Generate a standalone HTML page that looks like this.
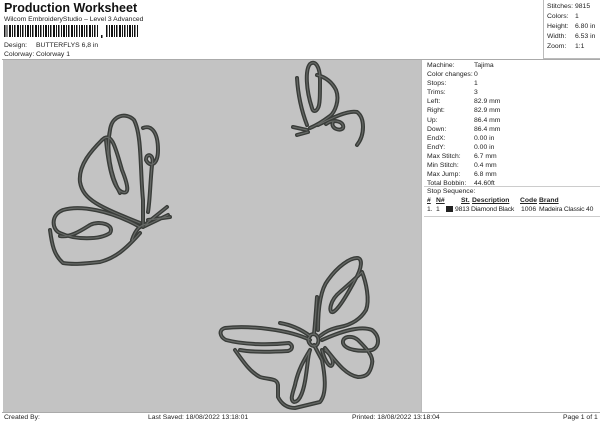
<!DOCTYPE html>
<html><head><meta charset="utf-8"><style>
*{margin:0;padding:0;box-sizing:border-box}
body{width:600px;height:424px;background:#fff;font-family:"Liberation Sans",sans-serif;position:relative;overflow:hidden;color:#222}
.a{position:absolute;white-space:nowrap}
.s{font-size:6.8px}
</style></head><body>
<div class="a" style="left:4px;top:1px;font-size:12.5px;font-weight:bold;color:#111">Production Worksheet</div>
<div class="a s" style="left:4px;top:16px">Wilcom EmbroideryStudio – Level 3 Advanced</div>
<svg class="a" style="left:4px;top:25px" width="135" height="14">
<g fill="#111">
<rect x="0" y="0" width="1.5" height="12"/><rect x="2.5" y="0" width="1" height="12"/><rect x="5" y="0" width="2" height="12"/><rect x="8" y="0" width="1" height="12"/><rect x="10" y="0" width="1.5" height="12"/><rect x="13" y="0" width="2" height="12"/><rect x="16" y="0" width="1" height="12"/><rect x="18" y="0" width="1.5" height="12"/><rect x="21" y="0" width="1" height="12"/><rect x="23" y="0" width="2" height="12"/><rect x="26" y="0" width="1" height="12"/><rect x="28" y="0" width="1.5" height="12"/><rect x="31" y="0" width="2" height="12"/><rect x="34" y="0" width="1" height="12"/><rect x="36" y="0" width="1.5" height="12"/><rect x="39" y="0" width="1" height="12"/><rect x="41" y="0" width="2" height="12"/><rect x="44" y="0" width="1" height="12"/><rect x="46" y="0" width="1.5" height="12"/><rect x="49" y="0" width="2" height="12"/><rect x="52" y="0" width="1" height="12"/><rect x="54" y="0" width="1.5" height="12"/><rect x="57" y="0" width="1" height="12"/><rect x="59" y="0" width="2" height="12"/><rect x="62" y="0" width="1" height="12"/><rect x="64" y="0" width="1.5" height="12"/><rect x="67" y="0" width="2" height="12"/><rect x="70" y="0" width="1" height="12"/><rect x="72" y="0" width="1.5" height="12"/><rect x="75" y="0" width="1" height="12"/><rect x="77" y="0" width="2" height="12"/><rect x="80" y="0" width="1" height="12"/><rect x="82" y="0" width="1.5" height="12"/><rect x="85" y="0" width="2" height="12"/><rect x="88" y="0" width="1" height="12"/><rect x="90" y="0" width="1.5" height="12"/><rect x="93" y="0" width="1" height="12"/>
<rect x="97" y="10" width="1.5" height="3"/>
<rect x="102" y="0" width="1.5" height="12"/><rect x="105" y="0" width="1" height="12"/><rect x="107" y="0" width="2" height="12"/><rect x="110" y="0" width="1" height="12"/><rect x="112" y="0" width="1.5" height="12"/><rect x="115" y="0" width="2" height="12"/><rect x="118" y="0" width="1" height="12"/><rect x="120" y="0" width="1.5" height="12"/><rect x="123" y="0" width="1" height="12"/><rect x="125" y="0" width="2" height="12"/><rect x="128" y="0" width="1" height="12"/><rect x="130" y="0" width="1.5" height="12"/><rect x="133" y="0" width="1" height="12"/>
</g></svg>
<div class="a s" style="left:4px;top:42px">Design:</div><div class="a s" style="left:36px;top:42px">BUTTERFLYS 6,8 in</div>
<div class="a s" style="left:4px;top:51px">Colorway:</div><div class="a s" style="left:36px;top:51px">Colorway 1</div>

<div class="a" style="left:543px;top:0;width:57px;height:59px;border-left:1px solid #bbb;border-bottom:1px solid #bbb"></div>
<div class="a s" style="left:547px;top:2px;line-height:10px">Stitches:<br>Colors:<br>Height:<br>Width:<br>Zoom:</div>
<div class="a s" style="left:575px;top:2px;line-height:10px">9815<br>1<br>6.80 in<br>6.53 in<br>1:1</div>

<div class="a" style="left:2px;top:59px;width:598px;height:1px;background:#aaa"></div>
<div class="a" style="left:3px;top:60px;width:418px;height:352px;background:#c3c3c3"></div>
<div class="a" style="left:421px;top:60px;width:179px;height:352px;border-left:1px solid #bbb"></div>
<div class="a s" style="left:427px;top:61px;line-height:9.1px">Machine:<br>Color changes:<br>Stops:<br>Trims:<br>Left:<br>Right:<br>Up:<br>Down:<br>EndX:<br>EndY:<br>Max Stitch:<br>Min Stitch:<br>Max Jump:<br>Total Bobbin:</div>
<div class="a s" style="left:474px;top:61px;line-height:9.1px">Tajima<br>0<br>1<br>3<br>82.9 mm<br>82.9 mm<br>86.4 mm<br>86.4 mm<br>0.00 in<br>0.00 in<br>6.7 mm<br>0.4 mm<br>6.8 mm<br>44.60ft</div>
<div class="a" style="left:424px;top:186px;width:176px;height:1px;background:#ccc"></div>
<div class="a s" style="left:427px;top:188px">Stop Sequence:</div>
<div class="a s" style="left:427px;top:197px;font-weight:bold;text-decoration:underline">#</div>
<div class="a s" style="left:436px;top:197px;font-weight:bold;text-decoration:underline">N#</div>
<div class="a s" style="left:461px;top:197px;font-weight:bold;text-decoration:underline">St.</div>
<div class="a s" style="left:472px;top:197px;font-weight:bold;text-decoration:underline">Description</div>
<div class="a s" style="left:520px;top:197px;font-weight:bold;text-decoration:underline">Code</div>
<div class="a s" style="left:539px;top:197px;font-weight:bold;text-decoration:underline">Brand</div>
<div class="a s" style="left:427px;top:206px">1.</div>
<div class="a s" style="left:436px;top:206px">1</div>
<div class="a" style="left:446px;top:206px;width:7px;height:6px;background:#222"></div>
<div class="a s" style="left:455px;top:206px;letter-spacing:-0.2px">9813 Diamond Black</div>
<div class="a s" style="left:521px;top:206px">1006</div>
<div class="a s" style="left:539px;top:206px;letter-spacing:-0.2px">Madeira Classic 40</div>
<div class="a" style="left:424px;top:216px;width:176px;height:1px;background:#ccc"></div>

<svg class="a" style="left:0;top:0" width="600" height="424" fill="none" stroke-linecap="round" stroke-linejoin="round">
<defs><g id="b">
<path d="M120 193 C110 175 106 150 110 130 C112 115 126 112 134 120 C142 135 140 170 143 200 L143 227"/>
<path d="M102 140 C112 130 116 150 122 170 C128 185 130 195 122 192 C112 188 108 160 106 140"/>
<path d="M102 140 C92 150 78 165 80 182 C83 200 100 207 140 223"/>
<path d="M143 128 C150 125 158 130 158 150 C158 165 150 168 146 160 C146 152 155 154 152 165 C150 185 150 200 148 212"/>
<path d="M140 227 C110 210 80 205 63 210 C50 215 52 230 60 233 C75 240 100 240 110 233 C115 225 100 220 90 225 C82 230 70 238 60 236"/>
<path d="M50 230 C52 245 54 255 63 263 C75 265 90 263 100 262 C115 258 125 250 140 233"/>
<path d="M147 223 L167 207 M148 220 L170 217 M145 226 L168 215 M132 240 C136 228 142 224 148 224"/>
<path d="M312 108 C306 90 305 70 310 64 C315 60 320 66 320 80 C320 95 320 105 318 108 C316 112 313 112 312 108"/>
<path d="M297 78 C298 95 302 112 307 125"/>
<path d="M317 75 C325 77 332 82 336 90 C340 100 335 112 330 116 C322 122 315 126 310 128"/>
<path d="M318 125 C332 118 348 110 357 112 C365 118 365 135 357 145"/>
<path d="M326 124 C334 118 345 122 343 128 C340 132 330 128 333 122"/>
<path d="M293 127 L307 130 M297 135 L308 132"/>
<path d="M310 336 C306 340 310 346 314 346 C319 346 320 338 316 335 C313 333 310 335 310 336"/>
<path d="M318 330 C318 310 320 290 328 280 C338 266 350 258 357 258 C363 258 362 268 355 280 C347 295 338 310 333 312 C328 313 330 300 340 292 C348 285 356 278 362 272 C366 282 370 300 366 310 C360 320 350 325 340 327 C330 329 325 332 320 336"/>
<path d="M322 340 C340 332 360 325 372 330 C380 336 380 347 372 350 C360 352 345 350 343 343 C342 336 352 335 358 340 C366 348 374 356 372 364 C370 374 366 377 358 377 C345 375 335 360 325 348"/>
<path d="M310 340 C290 330 250 325 225 328 C218 330 220 337 226 340 C245 345 270 345 289 343 C294 346 292 350 288 351 C270 352 250 352 240 350"/>
<path d="M235 350 C242 360 250 372 260 377 C270 380 277 378 278 385 L278 397 C282 405 288 408 295 408 L320 402 C326 395 326 380 322 360 L314 345"/>
<path d="M310 350 C304 360 298 370 295 385 C292 395 290 400 294 402 C300 402 304 390 306 375 C308 362 308 355 310 350"/>
<path d="M322 350 C324 358 328 366 331 366 C335 364 332 355 325 350"/>
<path d="M317 297 C316 310 315 325 314 334 M280 323 C292 325 302 330 310 336"/>
</g></defs>
<use href="#b" stroke="#393c39" stroke-width="4"/>
<use href="#b" stroke="#666966" stroke-width="1.2"/>
</svg>

<div class="a" style="left:2px;top:412px;width:598px;height:1px;background:#aaa"></div>
<div class="a s" style="left:4px;top:414px">Created By:</div>
<div class="a s" style="left:148px;top:414px">Last Saved: 18/08/2022 13:18:01</div>
<div class="a s" style="left:352px;top:414px">Printed: 18/08/2022 13:18:04</div>
<div class="a s" style="left:563px;top:414px">Page 1 of 1</div>
</body></html>
